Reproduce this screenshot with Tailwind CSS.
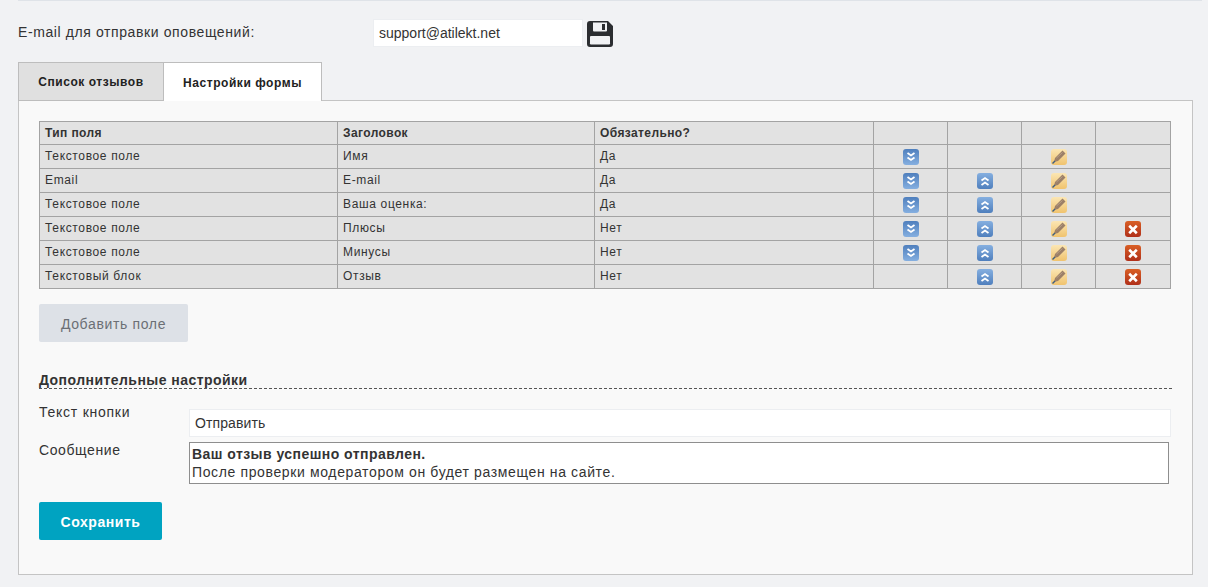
<!DOCTYPE html>
<html lang="ru">

<head>
    <meta charset="UTF-8">
    <meta name="viewport" content="width=device-width, initial-scale=1.0">
    <title>Настройки формы</title>
    <script src="https://cdn.jsdelivr.net/npm/@tailwindcss/browser@4"></script>
</head>

<body class="bg-[#f1f2f4] font-['Liberation_Sans',sans-serif] text-[#333] overflow-hidden">
    <svg width="0" height="0" class="absolute">
        <defs>
            <linearGradient id="gDown" x1="0" y1="0" x2="0" y2="1">
                <stop offset="0" stop-color="#4f7fbd" />
                <stop offset="1" stop-color="#85afe0" />
            </linearGradient>
            <linearGradient id="gUp" x1="0" y1="0" x2="0" y2="1">
                <stop offset="0" stop-color="#85afe0" />
                <stop offset="1" stop-color="#4f7fbd" />
            </linearGradient>
            <linearGradient id="gEdit" x1="0" y1="0" x2="0" y2="1">
                <stop offset="0" stop-color="#fbe6b4" />
                <stop offset="1" stop-color="#f0c36e" />
            </linearGradient>
            <linearGradient id="gDel" x1="0" y1="0" x2="0" y2="1">
                <stop offset="0" stop-color="#d95f25" />
                <stop offset="1" stop-color="#b0301a" />
            </linearGradient>
            <symbol id="iDown" viewBox="0 0 16 16">
                <rect width="16" height="16" rx="3" fill="url(#gDown)" />
                <path d="M4.500 4 8 6.500 11.500 4M4.500 8.500 8 11 11.500 8.500" fill="none" stroke="#fff" stroke-width="1.800" />
            </symbol>
            <symbol id="iUp" viewBox="0 0 16 16">
                <rect width="16" height="16" rx="3" fill="url(#gUp)" />
                <path d="M4.500 7.500 8 5 11.500 7.500M4.500 12 8 9.500 11.500 12" fill="none" stroke="#fff" stroke-width="1.800" />
            </symbol>
            <symbol id="iEdit" viewBox="0 0 16 16">
                <rect width="16" height="16" rx="3" fill="url(#gEdit)" />
                <path d="M11.500 1.500 14.500 4.500 7 12 3 13 4 9Z" fill="#9c8068" />
                <path d="M5.500 9 11.500 3.500" stroke="#b89e86" stroke-width="1" />
                <path d="M1.500 14.500 4 12" stroke="#3f5f80" stroke-width="1.500" />
            </symbol>
            <symbol id="iDel" viewBox="0 0 16 16">
                <rect width="16" height="16" rx="3" fill="url(#gDel)" />
                <path d="M4.200 4.800 11.800 12.200M11.800 4.800 4.200 12.200" stroke="#fff" stroke-width="2.600" />
            </symbol>
        </defs>
    </svg>

    <div class="ml-[18px] mr-[6px] h-px bg-[#dfe3e8]"></div>

    <div class="pl-[18px] pr-[15px]">
        <div class="flex items-start h-[61px] pt-[18px]">
            <label class="w-[355px] pt-[5px] text-[14px] leading-[16px] tracking-[0.6px]">E-mail для отправки оповещений:</label>
            <input type="text" value="support@atilekt.net" class="w-[210px] h-[28px] bg-white border border-[#eceef1] px-[5px] text-[14px] text-[#333] outline-none">
            <svg class="w-[26px] h-[26px] ml-[4px] mt-[2px]" viewBox="0 0 26 26">
                <path fill="#2b2d30" fill-rule="evenodd" d="M3 0H21L26 5V23A3 3 0 0 1 23 26H3A3 3 0 0 1 0 23V3A3 3 0 0 1 3 0ZM6 1.500V9.500A1 1 0 0 0 7 10.500H19A1 1 0 0 0 20 9.500V1.500ZM15 3H18V9H15ZM4 15A1 1 0 0 0 3 16V22A1 1 0 0 0 4 23.500H22A1 1 0 0 0 23 22V16A1 1 0 0 0 22 15Z" />
            </svg>
        </div>

        <div class="flex h-[39px] relative z-10 text-[12px] font-bold text-[#222] tracking-[0.55px]">
            <a class="w-[145px] h-[39px] pt-px flex items-center justify-center bg-[#e0e0e0] border border-[#bdbdbd] border-r-0">Список отзывов</a>
            <a class="w-[159px] h-[39px] pt-px flex items-center justify-center bg-white border border-[#bdbdbd] border-b-0">Настройки формы</a>
        </div>

        <div class="w-[1175px] h-[475px] -mt-px bg-[#f9f9f9] border border-[#c4c4c4] pt-[20px] pl-[20px]">
            <table class="w-[1131px] table-fixed border-collapse bg-[#e2e2e2] text-[12px] text-[#333] tracking-[0.65px]">
                <colgroup>
                    <col class="w-[298px]">
                    <col class="w-[257px]">
                    <col class="w-[279px]">
                    <col class="w-[74px]">
                    <col class="w-[74px]">
                    <col class="w-[74px]">
                    <col class="w-[75px]">
                </colgroup>
                <thead>
                    <tr class="h-[23px] font-bold text-left tracking-[0.4px]">
                        <th class="border border-[#a3a3a3] px-[5px]">Тип поля</th>
                        <th class="border border-[#a3a3a3] px-[5px]">Заголовок</th>
                        <th class="border border-[#a3a3a3] px-[5px]">Обязательно?</th>
                        <th class="border border-[#a3a3a3]"></th>
                        <th class="border border-[#a3a3a3]"></th>
                        <th class="border border-[#a3a3a3]"></th>
                        <th class="border border-[#a3a3a3]"></th>
                    </tr>
                </thead>
                <tbody>
                    <tr class="h-[24px]">
                        <td class="border border-[#a3a3a3] px-[5px] pb-[2px]">Текстовое поле</td>
                        <td class="border border-[#a3a3a3] px-[5px] pb-[2px]">Имя</td>
                        <td class="border border-[#a3a3a3] px-[5px] pb-[2px]">Да</td>
                        <td class="border border-[#a3a3a3]"><svg class="w-4 h-4 mx-auto"><use href="#iDown" /></svg></td>
                        <td class="border border-[#a3a3a3]"></td>
                        <td class="border border-[#a3a3a3]"><svg class="w-4 h-4 mx-auto"><use href="#iEdit" /></svg></td>
                        <td class="border border-[#a3a3a3]"></td>
                    </tr>
                    <tr class="h-[24px]">
                        <td class="border border-[#a3a3a3] px-[5px] pb-[2px]">Email</td>
                        <td class="border border-[#a3a3a3] px-[5px] pb-[2px]">E-mail</td>
                        <td class="border border-[#a3a3a3] px-[5px] pb-[2px]">Да</td>
                        <td class="border border-[#a3a3a3]"><svg class="w-4 h-4 mx-auto"><use href="#iDown" /></svg></td>
                        <td class="border border-[#a3a3a3]"><svg class="w-4 h-4 mx-auto"><use href="#iUp" /></svg></td>
                        <td class="border border-[#a3a3a3]"><svg class="w-4 h-4 mx-auto"><use href="#iEdit" /></svg></td>
                        <td class="border border-[#a3a3a3]"></td>
                    </tr>
                    <tr class="h-[24px]">
                        <td class="border border-[#a3a3a3] px-[5px] pb-[2px]">Текстовое поле</td>
                        <td class="border border-[#a3a3a3] px-[5px] pb-[2px]">Ваша оценка:</td>
                        <td class="border border-[#a3a3a3] px-[5px] pb-[2px]">Да</td>
                        <td class="border border-[#a3a3a3]"><svg class="w-4 h-4 mx-auto"><use href="#iDown" /></svg></td>
                        <td class="border border-[#a3a3a3]"><svg class="w-4 h-4 mx-auto"><use href="#iUp" /></svg></td>
                        <td class="border border-[#a3a3a3]"><svg class="w-4 h-4 mx-auto"><use href="#iEdit" /></svg></td>
                        <td class="border border-[#a3a3a3]"></td>
                    </tr>
                    <tr class="h-[24px]">
                        <td class="border border-[#a3a3a3] px-[5px] pb-[2px]">Текстовое поле</td>
                        <td class="border border-[#a3a3a3] px-[5px] pb-[2px]">Плюсы</td>
                        <td class="border border-[#a3a3a3] px-[5px] pb-[2px]">Нет</td>
                        <td class="border border-[#a3a3a3]"><svg class="w-4 h-4 mx-auto"><use href="#iDown" /></svg></td>
                        <td class="border border-[#a3a3a3]"><svg class="w-4 h-4 mx-auto"><use href="#iUp" /></svg></td>
                        <td class="border border-[#a3a3a3]"><svg class="w-4 h-4 mx-auto"><use href="#iEdit" /></svg></td>
                        <td class="border border-[#a3a3a3]"><svg class="w-4 h-4 mx-auto"><use href="#iDel" /></svg></td>
                    </tr>
                    <tr class="h-[24px]">
                        <td class="border border-[#a3a3a3] px-[5px] pb-[2px]">Текстовое поле</td>
                        <td class="border border-[#a3a3a3] px-[5px] pb-[2px]">Минусы</td>
                        <td class="border border-[#a3a3a3] px-[5px] pb-[2px]">Нет</td>
                        <td class="border border-[#a3a3a3]"><svg class="w-4 h-4 mx-auto"><use href="#iDown" /></svg></td>
                        <td class="border border-[#a3a3a3]"><svg class="w-4 h-4 mx-auto"><use href="#iUp" /></svg></td>
                        <td class="border border-[#a3a3a3]"><svg class="w-4 h-4 mx-auto"><use href="#iEdit" /></svg></td>
                        <td class="border border-[#a3a3a3]"><svg class="w-4 h-4 mx-auto"><use href="#iDel" /></svg></td>
                    </tr>
                    <tr class="h-[24px]">
                        <td class="border border-[#a3a3a3] px-[5px] pb-[2px]">Текстовый блок</td>
                        <td class="border border-[#a3a3a3] px-[5px] pb-[2px]">Отзыв</td>
                        <td class="border border-[#a3a3a3] px-[5px] pb-[2px]">Нет</td>
                        <td class="border border-[#a3a3a3]"></td>
                        <td class="border border-[#a3a3a3]"><svg class="w-4 h-4 mx-auto"><use href="#iUp" /></svg></td>
                        <td class="border border-[#a3a3a3]"><svg class="w-4 h-4 mx-auto"><use href="#iEdit" /></svg></td>
                        <td class="border border-[#a3a3a3]"><svg class="w-4 h-4 mx-auto"><use href="#iDel" /></svg></td>
                    </tr>
                </tbody>
            </table>

            <button class="block w-[149px] h-[38px] mt-[15px] pt-[2px] rounded-[2px] bg-[#dde1e7] text-[14px] text-[#6b6f75] tracking-[0.65px]">Добавить поле</button>

            <div class="w-[1133px] h-[19px] mt-[28px] border-b border-dashed border-[#555] text-[14px] leading-[18px] pt-px font-bold text-[#333] tracking-[0.45px]">Дополнительные настройки</div>

            <div class="flex mt-[15px] h-[33px]">
                <label class="w-[150px] text-[14px] leading-[16px] tracking-[0.75px]">Текст кнопки</label>
                <input type="text" value="Отправить" class="w-[982px] h-[28px] mt-[5px] bg-white border border-[#eceef1] px-[5px] text-[14px] text-[#333] tracking-[0.1px] outline-none">
            </div>

            <div class="flex mt-[5px]">
                <label class="w-[150px] text-[14px] leading-[16px] tracking-[0.6px]">Сообщение</label>
                <div class="w-[980px] h-[42px] bg-white border border-[#8e8e8e] pl-[2px] pt-[2px] text-[14px] leading-[18px] text-[#333] tracking-[0.63px]">
                    <p class="font-bold tracking-[0.45px]">Ваш отзыв успешно отправлен.</p>
                    <p>После проверки модератором он будет размещен на сайте.</p>
                </div>
            </div>

            <button class="block w-[123px] h-[38px] mt-[18px] pt-[2px] rounded-[2px] bg-[#00a3c1] text-[14px] font-bold text-white tracking-[0.55px]">Сохранить</button>
        </div>
    </div>
</body>

</html>
